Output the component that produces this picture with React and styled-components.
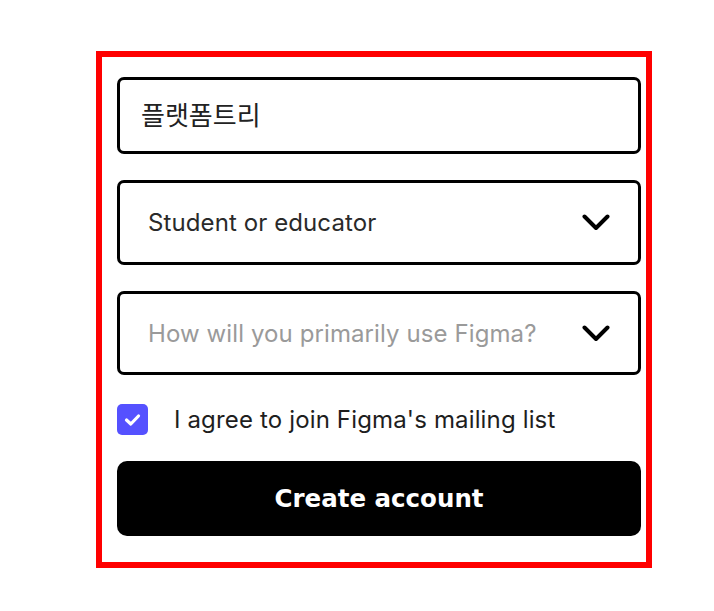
import styled, { createGlobalStyle } from "styled-components";

const GlobalStyle = createGlobalStyle`
    html, body {
        margin: 0;
        padding: 0;
        background: #fff;
    }
`;

const Frame = styled.div`
    box-sizing: border-box;
    width: 556px;
    height: 517px;
    margin: 51px 0 0 96px;
    border: 6px solid #ff0000;
    padding: 20px 5px 0 15px;
    display: flex;
    flex-direction: column;
    gap: 26px;
    font-family: Inter, "Liberation Sans", sans-serif;
`;

const Field = styled.div`
    box-sizing: border-box;
    height: ${(p) => p.$height}px;
    border: 3px solid #000;
    border-radius: 7px;
    padding: 0 28px 0 ${(p) => p.$left}px;
    display: flex;
    align-items: center;
    justify-content: space-between;
`;

const Value = styled.span`
    font-size: 24px;
    color: ${(p) => (p.$muted ? "#9a9a9a" : "#2a2a2a")};
    letter-spacing: 0.1px;
`;

const Korean = styled.span`
    font-family: "Noto Sans CJK KR", sans-serif;
    font-size: 26px;
    color: #222;
    margin-bottom: 5px;
`;

const Chevron = () => (
    <svg width="28" height="17" viewBox="0 0 28 17">
        <polyline
            points="2.5,2.5 14,14 25.5,2.5"
            fill="none"
            stroke="#000"
            strokeWidth="4"
            strokeLinecap="round"
            strokeLinejoin="round"
        />
    </svg>
);

const CheckRow = styled.label`
    display: flex;
    align-items: center;
    gap: 26px;
    height: 31px;
    margin-top: 3px;
    font-size: 24px;
    letter-spacing: 0.15px;
    color: #1e1e1e;
`;

const Box = styled.span`
    width: 31px;
    height: 31px;
    border-radius: 5px;
    background: #5551ff;
    display: grid;
    place-items: center;
    flex-shrink: 0;
`;

const Submit = styled.button`
    height: 75px;
    border: none;
    border-radius: 10px;
    background: #000;
    color: #fff;
    font-family: "DejaVu Sans", sans-serif;
    font-weight: bold;
    font-size: 24.5px;
    cursor: pointer;
`;

const App = () => {
    return (
        <>
            <GlobalStyle />
            <Frame>
                <Field $height={77} $left={21}>
                    <Korean>플랫폼트리</Korean>
                </Field>
                <Field $height={85} $left={28}>
                    <Value>Student or educator</Value>
                    <Chevron />
                </Field>
                <Field $height={84} $left={28}>
                    <Value $muted>How will you primarily use Figma?</Value>
                    <Chevron />
                </Field>
                <CheckRow>
                    <Box>
                        <svg width="17" height="14" viewBox="0 0 17 14">
                            <polyline
                                points="2.5,7 6.8,11 14.5,3"
                                fill="none"
                                stroke="#fff"
                                strokeWidth="3.2"
                                strokeLinecap="round"
                                strokeLinejoin="round"
                            />
                        </svg>
                    </Box>
                    I agree to join Figma's mailing list
                </CheckRow>
                <Submit>Create account</Submit>
            </Frame>
        </>
    );
};

export default App;
